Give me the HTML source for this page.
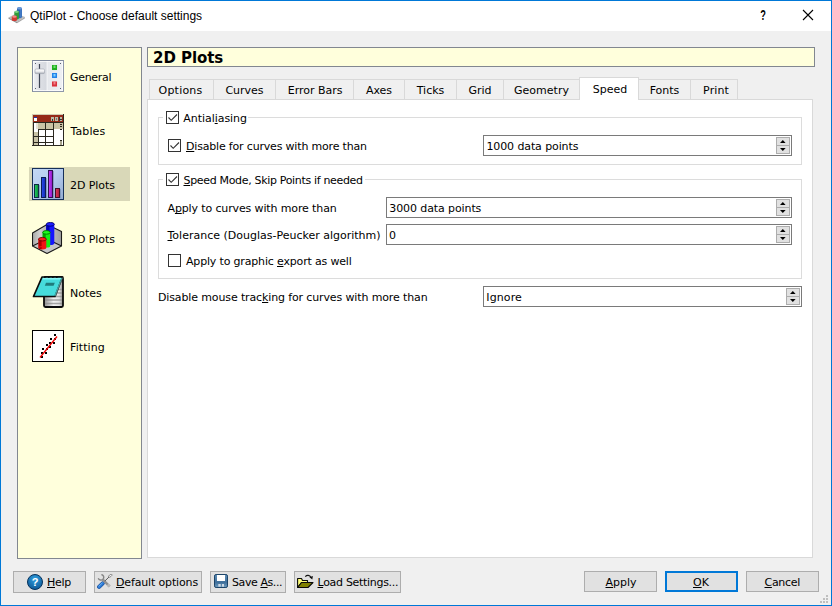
<!DOCTYPE html>
<html><head><meta charset="utf-8"><title>QtiPlot - Choose default settings</title>
<style>
*{box-sizing:border-box;margin:0;padding:0}
html,body{width:832px;height:606px;overflow:hidden;background:#f0f0f0}
body{position:relative;font-family:"DejaVu Sans","Liberation Sans",sans-serif;font-size:11px;color:#000;letter-spacing:-0.3px}
.abs{position:absolute}
.t{position:absolute;white-space:nowrap;line-height:14px;height:14px}
u{text-decoration:underline;text-decoration-skip-ink:none;text-underline-offset:1px;text-decoration-thickness:1px}
#win{position:absolute;left:0;top:0;width:832px;height:606px;border:1px solid #0078d7;background:#f0f0f0}
#titlebar{position:absolute;left:1px;top:1px;width:830px;height:30px;background:#fff}
#title{left:30px;top:8px;font-family:"Liberation Sans",sans-serif;font-size:12px;letter-spacing:0;line-height:16px;height:16px}
#side{position:absolute;left:17px;top:47px;width:125px;height:512px;background:#ffffdc;border:1px solid #828790}
#sel{position:absolute;left:29px;top:167px;width:101px;height:34px;background:#d9d8b8}
.ico{position:absolute;left:32px;width:32px;height:32px}
.lbl{left:70px}
#head{position:absolute;left:147px;top:47px;width:668px;height:20px;background:#ffffdc;border:1px solid #828790}
#headt{left:153px;top:48px;font-family:"DejaVu Sans","Liberation Sans",sans-serif;font-weight:bold;font-size:15px;line-height:20px;height:20px;letter-spacing:-0.05px}
#pane{position:absolute;left:147px;top:99px;width:666px;height:459px;background:#fff;border:1px solid #d9d9d9}
.tab{position:absolute;top:79px;height:20px;background:#f0f0f0;border:1px solid #d9d9d9;border-bottom:none}
.tab+.tab{}
.tabsel{top:77px;height:23px;background:#fff;z-index:2}
.grp{position:absolute;border:1px solid #dcdcdc}
.cb{position:absolute;width:13px;height:13px;border:1px solid #333;background:#fff}
.spin{position:absolute;height:21px;border:1px solid #7a7a7a;background:#fff}
.sb{position:absolute;right:2px;width:14px;background:#e1e1e1;border:1px solid #adadad}
.btn{position:absolute;top:571px;height:22px;background:#e1e1e1;border:1px solid #adadad}
</style></head><body>
<div id="win"></div>
<div id="titlebar"></div>
<svg class="abs" style="left:8px;top:6px" width="18" height="18" viewBox="0 0 18 18">
 <polygon points="0.500,11.500 8,7.500 17,11 9,16" fill="#bcbcbc"/><polygon points="0.500,11.500 9,16 9,17.300 0.500,12.800" fill="#8e8e8e"/><polygon points="17,11 9,16 9,17.300 17,12.300" fill="#a4a4a4"/>
 <rect x="9" y="1.200" width="5" height="11" rx="2" fill="#2e66b4"/><ellipse cx="11.500" cy="2.300" rx="2.300" ry="1.200" fill="#6b9ad8"/><rect x="12.300" y="2.500" width="1.200" height="9" fill="#5a8fd4" opacity=".7"/>
 <rect x="6.300" y="4.800" width="4.800" height="8.800" rx="1.800" fill="#2f9a3a"/><ellipse cx="8.700" cy="5.800" rx="2.200" ry="1.100" fill="#7fd486"/>
 <rect x="3.800" y="9.800" width="5.200" height="5.300" rx="1.600" fill="#d03a32"/><ellipse cx="6.400" cy="10.700" rx="2.300" ry="1.100" fill="#f28a84"/>
</svg>
<div class="t" id="title">QtiPlot - Choose default settings</div>
<div class="t" style="left:753px;width:20px;text-align:center;top:7px;font-family:'Liberation Sans',sans-serif;font-size:14px;line-height:16px;letter-spacing:0;font-weight:bold;transform:scaleX(0.66)">?</div>
<svg class="abs" style="left:802px;top:9px" width="12" height="12" viewBox="0 0 12 12"><path d="M1 1L11 11M11 1L1 11" stroke="#000" stroke-width="1.1" fill="none"/></svg>
<div id="side"></div>
<div id="sel"></div>
<div class="t lbl" style="top:71px">General</div>
<div class="t lbl" style="top:125px;left:70.500px;letter-spacing:0.1px">Tables</div>
<div class="t lbl" style="top:179px;letter-spacing:-0.08px">2D Plots</div>
<div class="t lbl" style="top:233px;letter-spacing:-0.08px">3D Plots</div>
<div class="t lbl" style="top:287px;letter-spacing:0">Notes</div>
<div class="t lbl" style="top:341px;letter-spacing:0.1px">Fitting</div>
<svg class="ico" style="top:60px" viewBox="0 0 32 32">
<defs><linearGradient id="g0" x1="0" x2="1" y1="0" y2="0"><stop offset="0" stop-color="#f3f4f7"/><stop offset="0.2" stop-color="#dfe1e6"/><stop offset="0.44" stop-color="#d6d9df"/><stop offset="0.47" stop-color="#f6f7f9"/><stop offset="0.5" stop-color="#e6e8ec"/><stop offset="1" stop-color="#eef0f4"/></linearGradient>
<linearGradient id="kn" x1="0" x2="0" y1="0" y2="1"><stop offset="0" stop-color="#ffffff"/><stop offset="0.5" stop-color="#f0f0f2"/><stop offset="1" stop-color="#a9adb6"/></linearGradient></defs>
<rect x="0.500" y="0.500" width="31" height="31" fill="url(#g0)" stroke="#8f98aa"/>
<rect x="1.500" y="1.500" width="29" height="29" fill="none" stroke="#fff" stroke-opacity=".75"/>
<path d="M0.500 31.500V0.500H31.500" fill="none" stroke="#7f889b"/>
<line x1="7.500" y1="4" x2="7.500" y2="28" stroke="#3d4454" stroke-width="1.200"/>
<rect x="3" y="9" width="9.500" height="4.600" rx="1.200" fill="url(#kn)" stroke="#9aa0ab" stroke-width=".6"/>
<rect x="19.500" y="4.500" width="6" height="6" rx="1" fill="#dfeee0"/><rect x="20" y="5" width="5" height="5" fill="#1fae1f"/><rect x="21.500" y="5.500" width="2" height="2.500" fill="#6fe06f"/>
<rect x="19.500" y="12.500" width="6" height="6" rx="1" fill="#dde8f4"/><rect x="20" y="13" width="5" height="5" fill="#2283ea"/><rect x="21.500" y="14" width="2" height="2.500" fill="#7fd0ff"/>
<rect x="19.500" y="21" width="6" height="6" rx="1" fill="#f2dede"/><rect x="20" y="21.500" width="5" height="5" fill="#d8303c"/><rect x="21.500" y="22" width="2" height="2.500" fill="#f08088"/>
<g fill="#596070"><rect x="3" y="3" width="1" height="1"/><rect x="28" y="3" width="1" height="1"/><rect x="3" y="28" width="1" height="1"/><rect x="28" y="28" width="1" height="1"/></g>
</svg>
<svg class="ico" style="top:114px" viewBox="0 0 32 32" shape-rendering="crispEdges">
<rect x="0" y="0" width="32" height="32" fill="#d2cdb4"/>
<rect x="31" y="0" width="1" height="32" fill="#2b2820"/><rect x="0" y="31" width="32" height="1" fill="#2b2820"/>
<rect x="1" y="1" width="30" height="7" fill="#962a18"/>
<rect x="2" y="4" width="3" height="3" fill="#fff"/><rect x="2" y="3" width="3" height="1" fill="#2030b0"/>
<rect x="19" y="3" width="3" height="4" fill="#b9bca6"/><rect x="23" y="3" width="3" height="4" fill="#b9bca6"/><rect x="27" y="3" width="3" height="4" fill="#b9bca6"/>
<rect x="20" y="5" width="1" height="2" fill="#333"/><rect x="24" y="4" width="1" height="2" fill="#777"/><rect x="27" y="3" width="1" height="4" fill="#333"/><rect x="28" y="5" width="2" height="1" fill="#333"/>
<rect x="1" y="8" width="30" height="1" fill="#2b2820"/>
<rect x="1" y="9" width="1" height="22" fill="#2b2820"/>
<rect x="2" y="9" width="4" height="22" fill="#c9c3a6"/>
<rect x="2" y="9" width="4" height="9" fill="#fff"/><rect x="4" y="9" width="2" height="6" fill="#e6e3d4"/>
<rect x="6" y="9" width="16" height="6" fill="#c9c3a6"/>
<rect x="22" y="9" width="9" height="6" fill="#c9c3a6"/>
<rect x="6" y="15" width="16" height="16" fill="#fff"/>
<rect x="22" y="15" width="9" height="16" fill="#fff"/>
<rect x="13" y="9" width="1" height="22" fill="#2b2820"/><rect x="21" y="9" width="1" height="22" fill="#2b2820"/><rect x="6" y="15" width="1" height="16" fill="#2b2820"/>
<rect x="6" y="15" width="16" height="1" fill="#2b2820"/><rect x="1" y="22" width="21" height="1" fill="#2b2820"/><rect x="1" y="28" width="21" height="1" fill="#2b2820"/>
<rect x="28" y="10" width="2" height="1" fill="#2b2820"/><rect x="28" y="12" width="2" height="1" fill="#2b2820"/><rect x="28" y="15" width="2" height="1" fill="#2b2820"/>
<rect x="28" y="26" width="2" height="1" fill="#2b2820"/><rect x="28" y="27" width="2" height="4" fill="#a9a58e"/>
</svg>
<svg class="ico" style="top:168px" viewBox="0 0 32 32">
<defs><linearGradient id="g2" x1="0" x2="1" y1="0" y2="1"><stop offset="0" stop-color="#c4d9f6"/><stop offset="0.5" stop-color="#b4cbee"/><stop offset="1" stop-color="#93aacf"/></linearGradient>
<linearGradient id="b1" x1="0" x2="1" y1="0" y2="0"><stop offset="0" stop-color="#1fd060"/><stop offset="1" stop-color="#0c8a3c"/></linearGradient>
<linearGradient id="b2" x1="0" x2="1" y1="0" y2="0"><stop offset="0" stop-color="#2a4cf0"/><stop offset="1" stop-color="#1228b0"/></linearGradient>
<linearGradient id="b3" x1="0" x2="1" y1="0" y2="0"><stop offset="0" stop-color="#c838ff"/><stop offset="1" stop-color="#8a1cc0"/></linearGradient>
<linearGradient id="b4" x1="0" x2="1" y1="0" y2="0"><stop offset="0" stop-color="#e03858"/><stop offset="1" stop-color="#a81c3c"/></linearGradient></defs>
<rect x="0.500" y="0.500" width="31" height="31" fill="url(#g2)" stroke="#16305a"/>
<g fill="#6f86ad" opacity=".6"><rect x="7" y="17" width="1" height="13"/><rect x="14" y="10" width="1" height="20"/><rect x="21" y="3" width="1" height="27"/><rect x="28" y="21" width="1" height="9"/></g>
<rect x="2.500" y="16.500" width="4" height="13" fill="url(#b1)" stroke="#0c2a44"/>
<rect x="9.500" y="9.500" width="4" height="20" fill="url(#b2)" stroke="#0c1c54"/>
<rect x="16.500" y="2.500" width="4" height="27" fill="url(#b3)" stroke="#301050"/>
<rect x="23.500" y="20.500" width="4" height="9" fill="url(#b4)" stroke="#401028"/>
</svg>
<svg class="ico" style="top:222px" viewBox="0 0 32 32">
<defs><linearGradient id="w1" x1="0" x2="1" y1="0" y2="0"><stop offset="0" stop-color="#a8a8a8"/><stop offset="0.5" stop-color="#d0d0d0"/><stop offset="1" stop-color="#b0b0b0"/></linearGradient>
<linearGradient id="w2" x1="0" x2="1" y1="0" y2="0"><stop offset="0" stop-color="#c8c8c8"/><stop offset="1" stop-color="#a0a0a0"/></linearGradient></defs>
<polygon points="0.500,11 15,2.500 15,17 0.500,24" fill="url(#w1)"/>
<polygon points="15,2.500 29.500,9.500 29.500,24 15,17" fill="url(#w2)"/>
<polygon points="0.500,24 15,17 29.500,24 15,31.500" fill="#c6c6c6"/>
<path d="M0.500 11L15 2.500L29.500 9.500V24L15 31.500L0.500 24ZM15 2.500V17M15 17L0.500 24M15 17L29.500 24" fill="none" stroke="#1a1a1a" stroke-width="1.100" stroke-linejoin="round"/>
<rect x="14.300" y="2.300" width="8" height="19" fill="#1414ff"/><rect x="14.300" y="2.300" width="3.200" height="19" fill="#0000b8"/><ellipse cx="18.300" cy="21.300" rx="4" ry="1.800" fill="#1414ff"/><path d="M14.300 21.300A4 1.800 0 0 0 17.500 22.900V21Z" fill="#0000b8"/><ellipse cx="18.300" cy="2.300" rx="4" ry="1.900" fill="#1c1cff" stroke="#000070" stroke-width=".9"/>
<rect x="10.700" y="10.400" width="7.500" height="13.500" fill="#14f014"/><rect x="10.700" y="10.400" width="3" height="13.500" fill="#00a800"/><ellipse cx="14.450" cy="23.900" rx="3.750" ry="1.700" fill="#14f014"/><path d="M10.700 23.900A3.750 1.700 0 0 0 13.700 25.500V23Z" fill="#00a800"/><ellipse cx="14.450" cy="10.400" rx="3.750" ry="1.800" fill="#1cff1c" stroke="#007000" stroke-width=".9"/>
<rect x="6.500" y="17.200" width="7.800" height="8.600" fill="#f41414"/><rect x="6.500" y="17.200" width="3.100" height="8.600" fill="#b00000"/><ellipse cx="10.400" cy="25.800" rx="3.900" ry="1.700" fill="#f41414"/><path d="M6.500 25.800A3.900 1.700 0 0 0 9.600 27.400V25Z" fill="#b00000"/><ellipse cx="10.400" cy="17.200" rx="3.900" ry="1.800" fill="#ff1c1c" stroke="#700000" stroke-width=".9"/>
</svg>
<svg class="ico" style="top:276px" viewBox="0 0 32 32">
<defs><linearGradient id="g4" x1="0" x2="1" y1="0" y2="0"><stop offset="0" stop-color="#909090"/><stop offset="0.5" stop-color="#f2f2f2"/><stop offset="0.8" stop-color="#e4e4e4"/><stop offset="1" stop-color="#8c8c8c"/></linearGradient></defs>
<rect x="12" y="1" width="19" height="30" rx="1.500" fill="url(#g4)" stroke="#0c0c0c" stroke-width="1.800"/>
<path d="M13 13.500H30M13 17H30M13 20.500H30M13 24H30M13 27.500H30" stroke="#8e8e8e" stroke-width="1.500" opacity=".75"/>
<polygon points="10,1 30.500,1 23,20.500 1.500,20.500" fill="#46dcdc" stroke="#0c0c0c" stroke-width="1.700" stroke-linejoin="round"/>
<path d="M30 2L23 20" stroke="#46dcdc" stroke-width="1.200"/>
<path d="M30.500 1.500L23.300 20.300" stroke="#555" stroke-width=".7"/>
<polygon points="11,2 29,2 28.300,3.600 10.400,3.600" fill="#8af6f6"/>
<path d="M12 1.300h1.600M16 1.300h1.600M20 1.300h1.600M24 1.300h1.600" stroke="#0c0c0c" stroke-width="1.400"/>
<polygon points="14,6.800 22.800,6.800 21.600,9.800 12.800,9.800" fill="#1f7c7c"/>
</svg>
<svg class="ico" style="top:330px" viewBox="0 0 32 32">
<rect x="0.500" y="0.500" width="31" height="31" fill="#fff" stroke="#000"/>
<g fill="#000"><rect x="22" y="4" width="2" height="2"/><rect x="18" y="8" width="2" height="2"/><rect x="22" y="8" width="2" height="2"/><rect x="17" y="12" width="2" height="2"/><rect x="21" y="12" width="2" height="2"/><rect x="14" y="14" width="2" height="2"/><rect x="17" y="16" width="2" height="2"/><rect x="10" y="18" width="2" height="2"/><rect x="14" y="18" width="2" height="2"/><rect x="9" y="22" width="2" height="2"/><rect x="13" y="22" width="2" height="2"/><rect x="9" y="26" width="2" height="2"/></g>
<line x1="8" y1="27.500" x2="25" y2="6.500" stroke="#f00000" stroke-width="1.300"/>
</svg>
<div id="head"></div>
<div class="t" id="headt">2D Plots</div>
<div id="pane"></div>
<div class="tab" style="left:149px;width:65px"></div><div class="t" style="left:148px;width:65px;text-align:center;top:84px;z-index:3;letter-spacing:0.2px">Options</div>
<div class="tab" style="left:213px;width:63px"></div><div class="t" style="left:213px;width:63px;text-align:center;top:84px;z-index:3;letter-spacing:0">Curves</div>
<div class="tab" style="left:275px;width:79px"></div><div class="t" style="left:275.700px;width:79px;text-align:center;top:84px;z-index:3;letter-spacing:0">Error Bars</div>
<div class="tab" style="left:353px;width:52px"></div><div class="t" style="left:353px;width:52px;text-align:center;top:84px;z-index:3;letter-spacing:0">Axes</div>
<div class="tab" style="left:404px;width:53px"></div><div class="t" style="left:404px;width:53px;text-align:center;top:84px;z-index:3;letter-spacing:0">Ticks</div>
<div class="tab" style="left:456px;width:48px"></div><div class="t" style="left:456px;width:48px;text-align:center;top:84px;z-index:3;letter-spacing:0">Grid</div>
<div class="tab" style="left:503px;width:77px"></div><div class="t" style="left:503px;width:77px;text-align:center;top:84px;z-index:3;letter-spacing:0">Geometry</div>
<div class="tab tabsel" style="left:579px;width:60px"></div><div class="t" style="left:580px;width:60px;text-align:center;top:83px;z-index:3;letter-spacing:0">Speed</div>
<div class="tab" style="left:638px;width:53px"></div><div class="t" style="left:638px;width:53px;text-align:center;top:84px;z-index:3;letter-spacing:0">Fonts</div>
<div class="tab" style="left:690px;width:48px"></div><div class="t" style="left:692px;width:48px;text-align:center;top:84px;z-index:3;letter-spacing:0.1px">Print</div>

<div class="grp" style="left:158px;top:117px;width:644px;height:48px"></div>
<div class="abs" style="left:163px;top:117px;width:85px;height:1px;background:#fff"></div>
<div class="grp" style="left:158px;top:179px;width:644px;height:100px"></div>
<div class="abs" style="left:163px;top:179px;width:202px;height:1px;background:#fff"></div>
<div class="cb" style="left:166px;top:111px"><svg width="11" height="11" viewBox="0 0 11 11" style="position:absolute;left:0;top:0"><path d="M1.500 5.500L4.200 8.300L10 2.500" stroke="#333" stroke-width="1.100" fill="none"/></svg></div>
<div class="cb" style="left:168px;top:139px"><svg width="11" height="11" viewBox="0 0 11 11" style="position:absolute;left:0;top:0"><path d="M1.500 5.500L4.200 8.300L10 2.500" stroke="#333" stroke-width="1.100" fill="none"/></svg></div>
<div class="cb" style="left:166px;top:173px"><svg width="11" height="11" viewBox="0 0 11 11" style="position:absolute;left:0;top:0"><path d="M1.500 5.500L4.200 8.300L10 2.500" stroke="#333" stroke-width="1.100" fill="none"/></svg></div>
<div class="cb" style="left:168px;top:254px"></div>
<div class="t" style="left:183.300px;top:112px;letter-spacing:-0.05px">Antial<u>i</u>asing</div>
<div class="t" style="left:186px;top:140px;letter-spacing:-0.18px"><u>D</u>isable for curves with more than</div>
<div class="t" style="left:183.5px;top:174px;letter-spacing:-0.33px"><u>S</u>peed Mode, Skip Points if needed</div>
<div class="t" style="left:167.5px;top:202px;letter-spacing:-0.13px">A<u>p</u>ply to curves with more than</div>
<div class="t" style="left:167.5px;top:229px;letter-spacing:0px"><u>T</u>olerance (Douglas-Peucker algorithm)</div>
<div class="t" style="left:186px;top:255px;letter-spacing:-0.17px">Apply to graphic <u>e</u>xport as well</div>
<div class="t" style="left:158px;top:291px;letter-spacing:-0.13px">Disable mouse trac<u>k</u>ing for curves with more than</div>
<div class="spin" style="left:483px;top:135px;width:309px"><div class="sb" style="top:1px;height:9px;right:1px"><svg width="12" height="7" viewBox="0 0 12 7" style="position:absolute;left:0;top:0"><polygon points="3,5 8.600,5 5.800,2.100" fill="#000"/></svg></div><div class="sb" style="top:9px;height:9px;right:1px"><svg width="12" height="7" viewBox="0 0 12 7" style="position:absolute;left:0;top:0"><polygon points="3,2 8.600,2 5.800,4.900" fill="#000"/></svg></div></div>
<div class="t" style="left:486.400px;top:140px;letter-spacing:-0.1px">1000 data points</div>
<div class="spin" style="left:386px;top:197px;width:406px"><div class="sb" style="top:1px;height:9px;right:1px"><svg width="12" height="7" viewBox="0 0 12 7" style="position:absolute;left:0;top:0"><polygon points="3,5 8.600,5 5.800,2.100" fill="#000"/></svg></div><div class="sb" style="top:9px;height:9px;right:1px"><svg width="12" height="7" viewBox="0 0 12 7" style="position:absolute;left:0;top:0"><polygon points="3,2 8.600,2 5.800,4.900" fill="#000"/></svg></div></div>
<div class="t" style="left:389.300px;top:202px;letter-spacing:-0.1px">3000 data points</div>
<div class="spin" style="left:386px;top:224px;width:406px"><div class="sb" style="top:1px;height:9px;right:1px"><svg width="12" height="7" viewBox="0 0 12 7" style="position:absolute;left:0;top:0"><polygon points="3,5 8.600,5 5.800,2.100" fill="#000"/></svg></div><div class="sb" style="top:9px;height:9px;right:1px"><svg width="12" height="7" viewBox="0 0 12 7" style="position:absolute;left:0;top:0"><polygon points="3,2 8.600,2 5.800,4.900" fill="#000"/></svg></div></div>
<div class="t" style="left:389px;top:229px;">0</div>
<div class="spin" style="left:483px;top:286px;width:319px"><div class="sb" style="top:1px;height:9px;right:1px"><svg width="12" height="7" viewBox="0 0 12 7" style="position:absolute;left:0;top:0"><polygon points="3,5 8.600,5 5.800,2.100" fill="#000"/></svg></div><div class="sb" style="top:9px;height:9px;right:1px"><svg width="12" height="7" viewBox="0 0 12 7" style="position:absolute;left:0;top:0"><polygon points="3,2 8.600,2 5.800,4.900" fill="#000"/></svg></div></div>
<div class="t" style="left:486.300px;top:291px;letter-spacing:0.1px">Ignore</div>
<div class="btn " style="left:13px;width:73px;height:22px"><svg width="16" height="16" viewBox="0 0 16 16" style="position:absolute;left:13px;top:2px"><defs><radialGradient id="hg" cx=".5" cy=".3" r=".8"><stop offset="0" stop-color="#2f9fe0"/><stop offset="1" stop-color="#0a4f8c"/></radialGradient></defs><circle cx="8" cy="8" r="7.500" fill="url(#hg)" stroke="#06325c" stroke-width="1"/><text x="8" y="12" text-anchor="middle" font-family="Liberation Sans,sans-serif" font-weight="bold" font-size="11" fill="#fff">?</text></svg></div>
<div class="t" style="left:47px;top:576px;"><u>H</u>elp</div>
<div class="btn " style="left:94px;width:108px;height:22px"><svg width="16" height="16" viewBox="0 0 16 16" style="position:absolute;left:2px;top:2px"><path d="M5.700 9.300L2.100 12.900" stroke="#1a4c94" stroke-width="4" stroke-linecap="round"/><path d="M5.700 9.300L2.100 12.900" stroke="#2a78d4" stroke-width="2.900" stroke-linecap="round"/><path d="M5.200 9.100L1.900 12.300" stroke="#6cb4f6" stroke-width="1" stroke-linecap="round"/><path d="M1.270 4.260A2.800 2.800 0 1 0 4.390 0.540" stroke="#848484" stroke-width="1.400" fill="none"/><path d="M5.600 5.300L12.500 12.300" stroke="#909090" stroke-width="2.400"/><path d="M10.600 10.400L12.800 12.600" stroke="#b8b8b8" stroke-width="2.800"/><path d="M12 3L7.800 7.100" stroke="#5c5c5c" stroke-width="1"/><ellipse cx="13.300" cy="1.700" rx="2.100" ry="1" transform="rotate(-40 13.300 1.700)" fill="#f6f6f6" stroke="#6c6c6c" stroke-width=".7"/></svg></div>
<div class="t" style="left:116px;top:576px;letter-spacing:-0.15px"><u>D</u>efault options</div>
<div class="btn " style="left:210px;width:76px;height:22px"><svg width="14" height="14" viewBox="0 0 14 14" style="position:absolute;left:3px;top:2px"><defs><linearGradient id="sv" x1="0" x2="0" y1="0" y2="1"><stop offset="0" stop-color="#5f8fb8"/><stop offset="0.6" stop-color="#3f6f9a"/><stop offset="1" stop-color="#6f9cc0"/></linearGradient></defs><rect x="0.500" y="0.500" width="13" height="13" rx="1.600" fill="url(#sv)" stroke="#1c4468"/><rect x="3" y="1" width="8" height="6" fill="#fff"/><rect x="4.300" y="10" width="2.400" height="2.700" fill="#cfd9e3"/><rect x="8" y="10" width="2" height="2.700" fill="#cfd9e3"/></svg></div>
<div class="t" style="left:232px;top:576px;letter-spacing:-0.42px">Save <u>A</u>s...</div>
<div class="btn " style="left:294px;width:107px;height:22px"><svg width="18" height="16" viewBox="0 0 18 16" style="position:absolute;left:2px;top:2px"><path d="M0.600 13.500V4.500H4.500L5.500 6.500H10.500V8.500H4.500Z" fill="#ffff78" stroke="#0a0a0a" stroke-width="1.100" stroke-linejoin="round"/><polygon points="4.500,8.500 16,8.500 11,13.500 0.600,13.500" fill="#808000" stroke="#0a0a0a" stroke-width="1.100" stroke-linejoin="round"/><path d="M8.300 2.600C9.800 0.800 12.800 0.800 14 3.400" stroke="#111" fill="none" stroke-width="1.100"/><polygon points="12.400,3.300 15.900,2 15.300,5.600" fill="#111"/></svg></div>
<div class="t" style="left:317.5px;top:576px;"><u>L</u>oad Settings...</div>
<div class="btn " style="left:584px;width:73px;height:21px"></div>
<div class="t" style="left:605.5px;top:576px;letter-spacing:0"><u>A</u>pply</div>
<div class="btn" style="left:665px;width:73px;height:21px;border:2px solid #0078d7"></div>
<div class="t" style="left:693px;top:576px;letter-spacing:0"><u>O</u>K</div>
<div class="btn " style="left:746px;width:73px;height:21px"></div>
<div class="t" style="left:764.5px;top:576px;"><u>C</u>ancel</div>
<div class="abs" style="left:826px;top:595px;width:2px;height:2px;background:#bfbfbf"></div><div class="abs" style="left:823px;top:598px;width:2px;height:2px;background:#bfbfbf"></div><div class="abs" style="left:826px;top:598px;width:2px;height:2px;background:#bfbfbf"></div><div class="abs" style="left:820px;top:601px;width:2px;height:2px;background:#bfbfbf"></div><div class="abs" style="left:823px;top:601px;width:2px;height:2px;background:#bfbfbf"></div><div class="abs" style="left:826px;top:601px;width:2px;height:2px;background:#bfbfbf"></div>
</body></html>
